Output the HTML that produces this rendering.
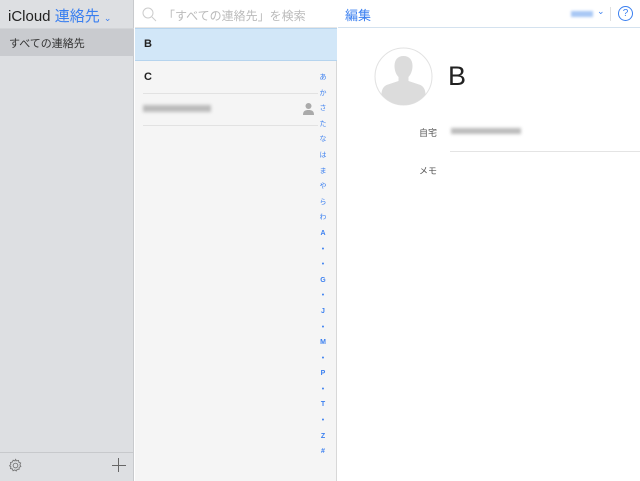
<!DOCTYPE html><html><head><meta charset="utf-8"><style>
*{margin:0;padding:0;box-sizing:border-box}
body{width:640px;height:481px;overflow:hidden;font-family:"Liberation Sans","Noto Sans CJK JP",sans-serif;background:#fff;position:relative}
.a{position:absolute}
.blur{background:#bbb;filter:blur(1.5px)}
</style></head><body>
<div class="a" style="left:0;top:0;width:134px;height:481px;background:#dddfe2;border-right:1px solid #c8cacd"></div>
<div class="a" style="left:8px;top:5px;font-size:15px;color:#222">iCloud <span style="color:#3a7ff0">連絡先</span> <span style="color:#3a7ff0;font-size:9px">⌄</span></div>
<div class="a" style="left:0;top:28px;width:134px;height:28px;background:#c9cbcf;border-top:1px solid #d2d4d7"></div>
<div class="a" style="left:9px;top:35px;font-size:11px;color:#333">すべての連絡先</div>
<div class="a" style="left:0;top:452px;width:134px;height:1px;background:#c7c9cc"></div>
<svg class="a" style="left:8px;top:458px" width="15" height="15" viewBox="0 0 16 16"><circle cx="8" cy="8" r="2.5" fill="none" stroke="#777" stroke-width="1"/><path d="M8 1.5l1.2 1.6 2-.5.4 2 1.9.8-.8 1.9 1 1.7-1.8 1-.1 2-2 .1-1 1.7-1.6-1.1-1.8.9-.7-1.9-2-.4.4-2L1.7 8.3 3 6.8l-.3-2 2-.5.8-1.9 1.9.7z" fill="none" stroke="#777" stroke-width="1"/></svg>
<div class="a" style="left:112px;top:465px;width:14px;height:1px;background:#666"></div>
<div class="a" style="left:118px;top:458px;width:1px;height:14px;background:#666"></div>

<div class="a" style="left:135px;top:0;width:202px;height:481px;background:#f5f5f5;border-right:1px solid #d8d8d8"></div>
<div class="a" style="left:135px;top:0;width:202px;height:28px;background:#fff;border-bottom:1px solid #e6e6e6"></div>
<svg class="a" style="left:142px;top:7px" width="15" height="15"><circle cx="6" cy="6" r="5" fill="none" stroke="#ccc" stroke-width="1"/><path d="M10 10l4 4" stroke="#ccc"/></svg>
<div class="a" style="left:163px;top:7px;font-size:12px;color:#bbb">「すべての連絡先」を検索</div>
<div class="a" style="left:135px;top:28px;width:202px;height:33px;background:#d2e7f8;border-top:1px solid #b6d4ee;border-bottom:1px solid #b6d4ee"></div>
<div class="a" style="left:144px;top:38px;font-size:11px;font-weight:bold;color:#222">B</div>
<div class="a" style="left:144px;top:71px;font-size:11px;font-weight:bold;color:#222">C</div>
<div class="a" style="left:143px;top:93px;width:175px;height:1px;background:#e2e2e2"></div>
<div class="a blur" style="left:143px;top:105px;width:68px;height:7px"></div>
<svg class="a" style="left:302px;top:102px" width="13" height="13"><circle cx="6.5" cy="4" r="3" fill="#aaa"/><path d="M1 13c0-4 2-5 5.5-5s5.5 1 5.5 5z" fill="#aaa"/></svg>
<div class="a" style="left:143px;top:125px;width:175px;height:1px;background:#e2e2e2"></div>
<div class="a" style="left:315px;top:70px;width:16px;font-size:7px;color:#3a7ff0;text-align:center;line-height:15.6px">あ<br>か<br>さ<br>た<br>な<br>は<br>ま<br>や<br>ら<br>わ<br><b>A</b><br>•<br>•<br><b>G</b><br>•<br><b>J</b><br>•<br><b>M</b><br>•<br><b>P</b><br>•<br><b>T</b><br>•<br><b>Z</b><br><b>#</b></div>

<div class="a" style="left:338px;top:0;width:302px;height:28px;border-bottom:1px solid #d4e2ef"></div>
<div class="a" style="left:345px;top:5px;font-size:13px;color:#3a7ff0">編集</div>
<div class="a" style="left:571px;top:11px;width:22px;height:6px;background:#a8c8f5;filter:blur(1.2px)"></div>
<div class="a" style="left:597px;top:6px;font-size:9px;color:#3a7ff0">⌄</div>
<div class="a" style="left:610px;top:7px;width:1px;height:14px;background:#e0e0e0"></div>
<div class="a" style="left:618px;top:6px;width:15px;height:15px;border:1px solid #3a7ff0;border-radius:50%;font-size:10px;color:#3a7ff0;text-align:center;line-height:13px">?</div>
<svg class="a" style="left:374px;top:47px" width="59" height="59" viewBox="0 0 59 59"><defs><clipPath id="c"><circle cx="29.5" cy="29.5" r="28.5"/></clipPath></defs><circle cx="29.5" cy="29.5" r="28.5" fill="#fff" stroke="#e2e2e2"/><g clip-path="url(#c)" fill="#dcdcdc"><path d="M29.5 9c-6 0-9 4-9 10 0 5 2 9 4 11v4l-12 4c-4 2-5 6-5 10v15h44V48c0-4-1-8-5-10l-12-4v-4c2-2 4-6 4-11 0-6-3-10-9-10z"/></g></svg>
<div class="a" style="left:448px;top:61px;font-size:27px;color:#222">B</div>
<div class="a" style="left:419px;top:126px;font-size:9px;color:#555">自宅</div>
<div class="a blur" style="left:451px;top:128px;width:70px;height:6px"></div>
<div class="a" style="left:450px;top:151px;width:190px;height:1px;background:#e4e4e4"></div>
<div class="a" style="left:419px;top:164px;font-size:9px;color:#555">メモ</div>
</body></html>
